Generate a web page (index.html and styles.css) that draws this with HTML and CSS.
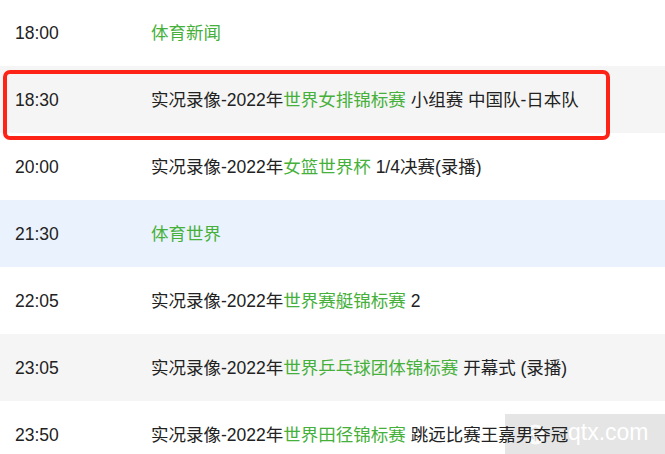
FILE: index.html
```html
<!DOCTYPE html>
<html lang="zh-CN">
<head>
  <meta charset="UTF-8">
  <title>节目单</title>
  <link rel="stylesheet" href="styles.css">
</head>
<body>
  <ul class="schedule">
    <li class="row">
      <span class="time">18:00</span>
      <span class="title"><a class="hl">体育新闻</a></span>
    </li>
    <li class="row gray current">
      <span class="time">18:30</span>
      <span class="title">实况录像-2022年<a class="hl">世界女排锦标赛</a> 小组赛 中国队-日本队</span>
      <div class="mark"></div>
    </li>
    <li class="row">
      <span class="time">20:00</span>
      <span class="title">实况录像-2022年<a class="hl">女篮世界杯</a> 1/4决赛(录播)</span>
    </li>
    <li class="row blue">
      <span class="time">21:30</span>
      <span class="title"><a class="hl">体育世界</a></span>
    </li>
    <li class="row">
      <span class="time">22:05</span>
      <span class="title">实况录像-2022年<a class="hl">世界赛艇锦标赛</a> 2</span>
    </li>
    <li class="row gray">
      <span class="time">23:05</span>
      <span class="title">实况录像-2022年<a class="hl">世界乒乓球团体锦标赛</a> 开幕式 (录播)</span>
    </li>
    <li class="row last">
      <span class="time">23:50</span>
      <span class="title">实况录像-2022年<a class="hl">世界田径锦标赛</a> 跳远比赛王嘉男夺冠</span>
    </li>
  </ul>

  <div class="watermark">
    <svg class="wm-logo" width="21" height="21" viewBox="0 0 22 22">
      <circle cx="11" cy="11" r="10.5" fill="#fff" opacity="0.85"/>
      <path d="M6 7 L11 4 L16 7 M11 8 L11 18 M7 12 L9 16 M15 12 L13 16" stroke="#d8d8d8" stroke-width="1.6" fill="none"/>
    </svg>
    <span class="wm-text">qtx.com</span>
  </div>
</body>
</html>
```

FILE: styles.css
```css
body {
  margin: 0;
  font-family: "Liberation Sans", "Noto Sans CJK SC", sans-serif;
  font-size: 17.5px;
  color: #222;
  background-color: #fff;
  overflow: hidden;
}
.schedule {
  list-style: none;
  margin: 0;
  padding: 0;
}
.row {
  position: relative;
  display: flex;
  align-items: center;
  height: 67px;
  padding-left: 15px;
  line-height: 20px;
}
.row:first-child {
  height: 66px;
}
.row.gray {
  background-color: #f5f5f5;
}
.row.blue {
  background-color: #eaf2fd;
}
.row.last {
  z-index: 2;
}
.time {
  width: 136px;
  flex-shrink: 0;
}
.title {
  white-space: nowrap;
}
.hl {
  color: #45b03a;
  text-decoration: none;
}
.mark {
  position: absolute;
  left: 3px;
  top: 4px;
  width: 599px;
  height: 62px;
  border: 4px solid #fd2417;
  border-radius: 7px;
}
.watermark {
  position: absolute;
  z-index: 1;
  left: 505px;
  top: 414px;
  width: 160px;
  height: 40px;
  background-color: rgba(0, 0, 0, 0.1);
  display: flex;
  align-items: center;
  padding-left: 20px;
  box-sizing: border-box;
  gap: 22px;
}
.wm-text {
  position: relative;
  z-index: 3;
  color: #fff;
  font-family: "Liberation Sans", sans-serif;
  font-size: 23px;
  line-height: 1;
  padding-bottom: 3px;
}
```
